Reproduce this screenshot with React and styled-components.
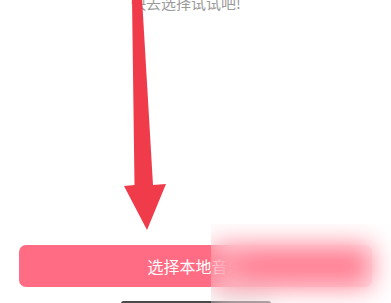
import React from "react";
import styled, { createGlobalStyle } from "styled-components";

const Global = createGlobalStyle`
  html, body { margin: 0; padding: 0; background: #fff; overflow: hidden; }
  body { font-family: "Noto Sans CJK SC", "Noto Sans", sans-serif; }
`;

const Screen = styled.div`
  position: relative;
  width: 391px;
  height: 303px;
  overflow: hidden;
  background: #ffffff;
  display: flex;
  flex-direction: column;
`;

const Hint = styled.div`
  margin-top: -7px;
  padding-left: 131px;
  font-size: 15px;
  line-height: 20px;
  color: #9a9a9a;
  white-space: nowrap;
`;

const Spacer = styled.div`
  height: 232px;
  flex-shrink: 0;
`;

const PrimaryButton = styled.button`
  flex-shrink: 0;
  margin: 0 19px;
  height: 42px;
  border: none;
  border-radius: 7px;
  background: #ff6c83;
  color: #ffffff;
  font-family: "Noto Sans CJK SC", "Noto Sans", sans-serif;
  font-size: 16px;
  display: flex;
  align-items: center;
  justify-content: center;
  padding: 0;
`;

const HomeBar = styled.div`
  flex-shrink: 0;
  margin: 14px auto 0;
  width: 150px;
  height: 5px;
  border-radius: 3px;
  background: #4a4a4a;
`;

const ArrowLayer = styled.svg`
  position: absolute;
  left: 0;
  top: 0;
  pointer-events: none;
`;

const BlurPatch = styled.div`
  position: absolute;
  left: 211px;
  top: 224px;
  right: 0;
  bottom: 0;
  backdrop-filter: blur(13px);
  -webkit-backdrop-filter: blur(13px);
  background: rgba(255, 255, 255, 0.12);
`;

export default function App() {
  return (
    <>
      <Global />
      <Screen>
        <Hint>快去选择试试吧!</Hint>
        <Spacer />
        <PrimaryButton>选择本地音乐</PrimaryButton>
        <HomeBar />
        <ArrowLayer width="391" height="303" viewBox="0 0 391 303">
          <path
            d="M132 -2 L142 -2 L153 185 L166 184 L147 230 L124 186 L134.5 185 Z"
            fill="#f03b4a"
          />
        </ArrowLayer>
        <BlurPatch />
      </Screen>
    </>
  );
}
